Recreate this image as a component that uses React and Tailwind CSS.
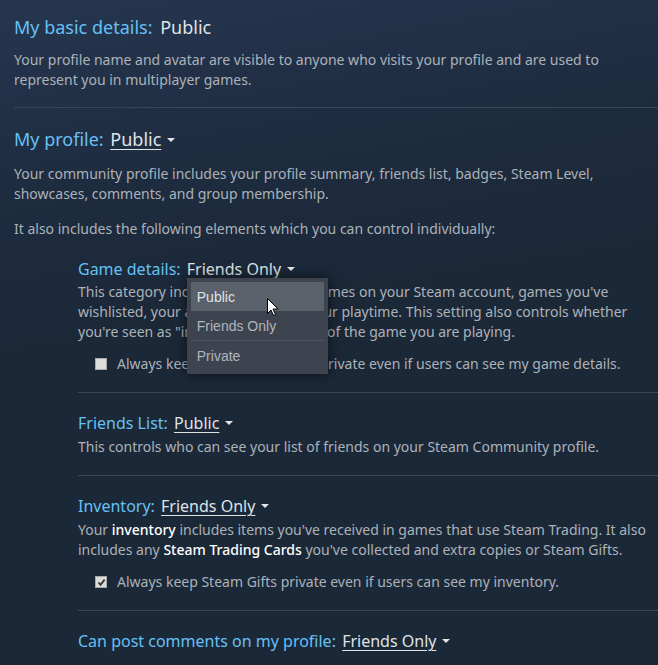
import React from 'react';

const font = { fontFamily: '"Noto Sans", Arial, sans-serif' };

const Caret = () => (
  <span className="inline-block ml-[6px] mb-[3px] w-0 h-0 border-l-[4px] border-r-[4px] border-t-[4px] border-l-transparent border-r-transparent border-t-[#e5e5e5] align-middle" />
);

const Value = ({ children }) => (
  <span className="text-[#dfe3e6] underline underline-offset-[3px] decoration-1">{children}</span>
);

const Checkbox = ({ checked }) => (
  <span className="w-[12px] h-[12px] shrink-0 bg-[#dcdcdc] border border-[#a9a9a9] flex items-center justify-center">
    {checked && (
      <svg width="9" height="9" viewBox="0 0 9 9">
        <path d="M1.5 4.5 L3.5 6.8 L7.6 1.6" stroke="#333" strokeWidth="1.8" fill="none" />
      </svg>
    )}
  </span>
);

const Separator = () => <div className="h-px bg-[#37475a]" />;

const Cursor = () => (
  <svg className="absolute left-[76px] top-[16px]" width="12" height="19" viewBox="0 0 12 19">
    <path d="M0.5 0.5 L0.5 15.5 L4 12 L6.5 17.5 L8.5 16.5 L6 11 L11 11 Z" fill="#fff" stroke="#000" strokeWidth="1" />
  </svg>
);

const Dropdown = () => (
  <div
    className="absolute left-[0px] top-[20px] w-[141px] bg-[#3d4450] shadow-[0_0_12px_rgba(0,0,0,0.6)] px-[4px] py-[4px] text-[14px] z-10"
    style={{ fontFamily: '"Liberation Sans", Arial, sans-serif' }}
  >
    <div className="relative h-[29px] bg-[#5a616b] text-[#dfe3e6] pl-[6px] flex items-center">
      Public
      <Cursor />
    </div>
    <div className="h-[29px] text-[#b0b5bb] pl-[6px] flex items-center">Friends Only</div>
    <div className="h-px bg-[#4e555f]" />
    <div className="h-[29px] text-[#b0b5bb] pl-[6px] flex items-center">Private</div>
  </div>
);

const Sub = ({ label, value, open, children }) => (
  <div className="pt-[19px] pb-[18px]">
    <div className="text-[16px] leading-[22px] text-[#66c0f4]">
      {label}:{' '}
      <span className="relative ml-[2px]">
        <Value>{value}</Value>
        <Caret />
        {open && <Dropdown />}
      </span>
    </div>
    {children}
  </div>
);

export default function App() {
  return (
    <div
      className="w-[658px] h-[665px] overflow-hidden bg-[#1b2838] bg-[linear-gradient(170deg,#263650_0%,#1e2c40_25%,#1b2838_45%)]"
      style={font}
    >
      <div className="pl-[14px] pt-[14px]">
        <div className="pr-[14px]">
          <div className="text-[18px] leading-[26px] text-[#66c0f4]">
            My basic details: <span className="ml-[3px] text-[#dfe3e6]">Public</span>
          </div>
          <p className="mt-[10px] text-[14px] leading-[20px] text-[#acb2b8]">
            Your profile name and avatar are visible to anyone who visits your profile and are used to represent you in multiplayer games.
          </p>
        </div>
        <div className="mt-[17px]"><Separator /></div>
        <div className="pr-[14px] pt-[18px]">
          <div className="text-[18px] leading-[26px] text-[#66c0f4]">
            My profile: <span className="ml-[2px]"><Value>Public</Value><Caret /></span>
          </div>
          <p className="mt-[12px] text-[14px] leading-[20px] text-[#acb2b8]">
            Your community profile includes your profile summary, friends list, badges, Steam Level, showcases, comments, and group membership.
          </p>
          <p className="mt-[15px] text-[14px] leading-[20px] text-[#acb2b8]">
            It also includes the following elements which you can control individually:
          </p>
        </div>
        <div className="pl-[64px] text-[14px] leading-[20px] text-[#acb2b8]">
          <Sub label="Game details" value="Friends Only" open>
            <p className="mt-[2px] pr-[14px]">
              This category includes the list of all games on your Steam account, games you've wishlisted, your achievements and your playtime. This setting also controls whether you're seen as "in-game" and the title of the game you are playing.
            </p>
            <label className="mt-[12px] ml-[17px] flex items-center gap-[10px]">
              <Checkbox />
              <span>Always keep my total playtime private even if users can see my game details.</span>
            </label>
          </Sub>
          <Separator />
          <Sub label="Friends List" value="Public">
            <p className="mt-[3px] pr-[14px]">
              This controls who can see your list of friends on your Steam Community profile.
            </p>
          </Sub>
          <Separator />
          <Sub label="Inventory" value="Friends Only">
            <p className="mt-[3px] pr-[8px]">
              Your <span className="text-[#ffffff] font-medium">inventory</span> includes items you've received in games that use Steam Trading. It also includes any <span className="text-[#ffffff] font-medium">Steam Trading Cards</span> you've collected and extra copies or Steam Gifts.
            </p>
            <label className="mt-[12px] ml-[17px] flex items-center gap-[10px]">
              <Checkbox checked />
              <span>Always keep Steam Gifts private even if users can see my inventory.</span>
            </label>
          </Sub>
          <Separator />
          <Sub label="Can post comments on my profile" value="Friends Only" />
        </div>
      </div>
    </div>
  );
}
